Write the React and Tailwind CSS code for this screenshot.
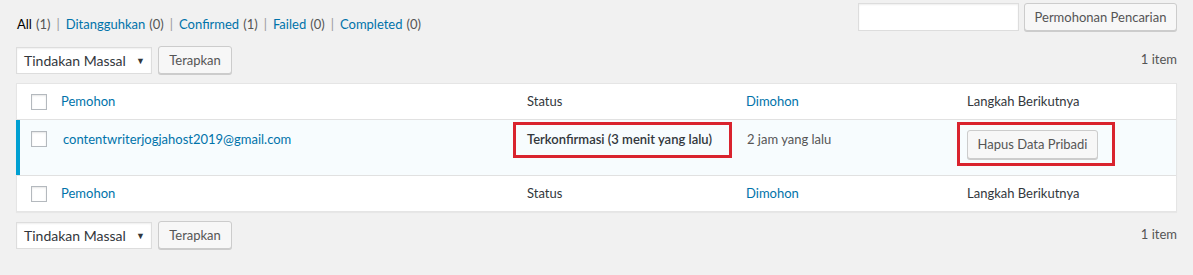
import { useState } from "react";

const statusLinks = [
  { label: "All", count: 1, current: true },
  { label: "Ditangguhkan", count: 0 },
  { label: "Confirmed", count: 1 },
  { label: "Failed", count: 0 },
  { label: "Completed", count: 0 },
];

const cols = "grid grid-cols-[36px_466px_219px_221px_1fr]";

function Checkbox() {
  return (
    <span className="block w-4 h-4 bg-white border border-[#b4b9be] shadow-[inset_0_1px_2px_rgba(0,0,0,0.1)]" />
  );
}

function Button({ children, className = "" }) {
  return (
    <button
      className={`h-[28px] px-[8px] bg-[#f7f7f7] border border-[#cccccc] rounded-[3px] shadow-[0_1px_0_#cccccc] text-[#555] text-[13px] leading-none whitespace-nowrap ${className}`}
    >
      {children}
    </button>
  );
}

function TableNav() {
  return (
    <div className="flex items-center justify-between">
      <div className="flex items-center gap-[6px]">
        <div className="relative w-[136px] h-[27px] bg-white border border-[#dddddd] shadow-[inset_0_1px_2px_rgba(0,0,0,0.07)] flex items-center pl-[7px] text-[#32373c] text-[14px]">
          Tindakan Massal
          <span className="absolute right-[6px] top-[6px] text-[9px] text-[#32373c]">▼</span>
        </div>
        <Button className="w-[74px]">Terapkan</Button>
      </div>
      <span className="text-[13px] text-[#555]">1 item</span>
    </div>
  );
}

function HeadRow({ border }) {
  return (
    <div className={`${cols} h-[36px] items-center ${border}`}>
      <div className="pl-[14px]">
        <Checkbox />
      </div>
      <div className="pl-[8px] text-[#0073aa]">Pemohon</div>
      <div className="pl-[8px] text-[#32373c]">Status</div>
      <div className="pl-[8px] text-[#0073aa]">Dimohon</div>
      <div className="pl-[8px] text-[#32373c]">Langkah Berikutnya</div>
    </div>
  );
}

export default function App() {
  const [query, setQuery] = useState("");

  return (
    <div className="w-[1193px] h-[275px] bg-[#f1f1f1] px-[16px] pt-[3px] font-['Lato',sans-serif] text-[13px] text-[#555]">
      {/* Status filters + search */}
      <div className="flex items-start justify-between h-[43px]">
        <ul className="flex items-center mt-[12px] ml-[1px] text-[13px]">
          {statusLinks.map((s, i) => (
            <li key={s.label} className="flex items-center">
              {i > 0 && <span className="mx-[6px] text-[#999]">|</span>}
              <span className={s.current ? "text-black" : "text-[#0073aa]"}>{s.label}</span>
              <span className="ml-[4px] text-[#555]">({s.count})</span>
            </li>
          ))}
        </ul>
        <div className="flex items-center gap-[5px]">
          <input
            value={query}
            onChange={(e) => setQuery(e.target.value)}
            className="w-[161px] h-[28px] bg-white border border-[#dddddd] shadow-[inset_0_1px_2px_rgba(0,0,0,0.07)] outline-none"
          />
          <Button className="w-[153px]">Permohonan Pencarian</Button>
        </div>
      </div>

      <TableNav />

      {/* List table */}
      <div className="mt-[9px] bg-white border border-[#e5e5e5] shadow-[0_1px_1px_rgba(0,0,0,0.04)] text-[13px]">
        <HeadRow border="border-b border-[#e1e1e1]" />

        <div className={`${cols} h-[55px] bg-[#f7fcfe] border-l-[4px] border-[#00a0d2] -ml-px`}>
          <div className="pl-[11px] pt-[11px]">
            <Checkbox />
          </div>
          <div className="pl-[7px] pt-[10px] text-[#0073aa]">contentwriterjogjahost2019@gmail.com</div>
          <div className="pt-[2px] -ml-[9px]">
            <div className="w-[219px] h-[36px] border-[3px] border-[#d9232e] flex items-center pl-[11px] font-semibold text-[#32373c] whitespace-nowrap">
              Terkonfirmasi (3 menit yang lalu)
            </div>
          </div>
          <div className="pl-[6px] pt-[10px] text-[#555]">2 jam yang lalu</div>
          <div className="pt-[2px] -ml-[5px]">
            <div className="w-[158px] h-[44px] border-[3px] border-[#d9232e] flex items-center pl-[7px]">
              <Button className="w-[131px] h-[29px]">Hapus Data Pribadi</Button>
            </div>
          </div>
        </div>

        <HeadRow border="border-t border-[#e1e1e1]" />
      </div>

      <div className="mt-[9px]">
        <TableNav />
      </div>
    </div>
  );
}
